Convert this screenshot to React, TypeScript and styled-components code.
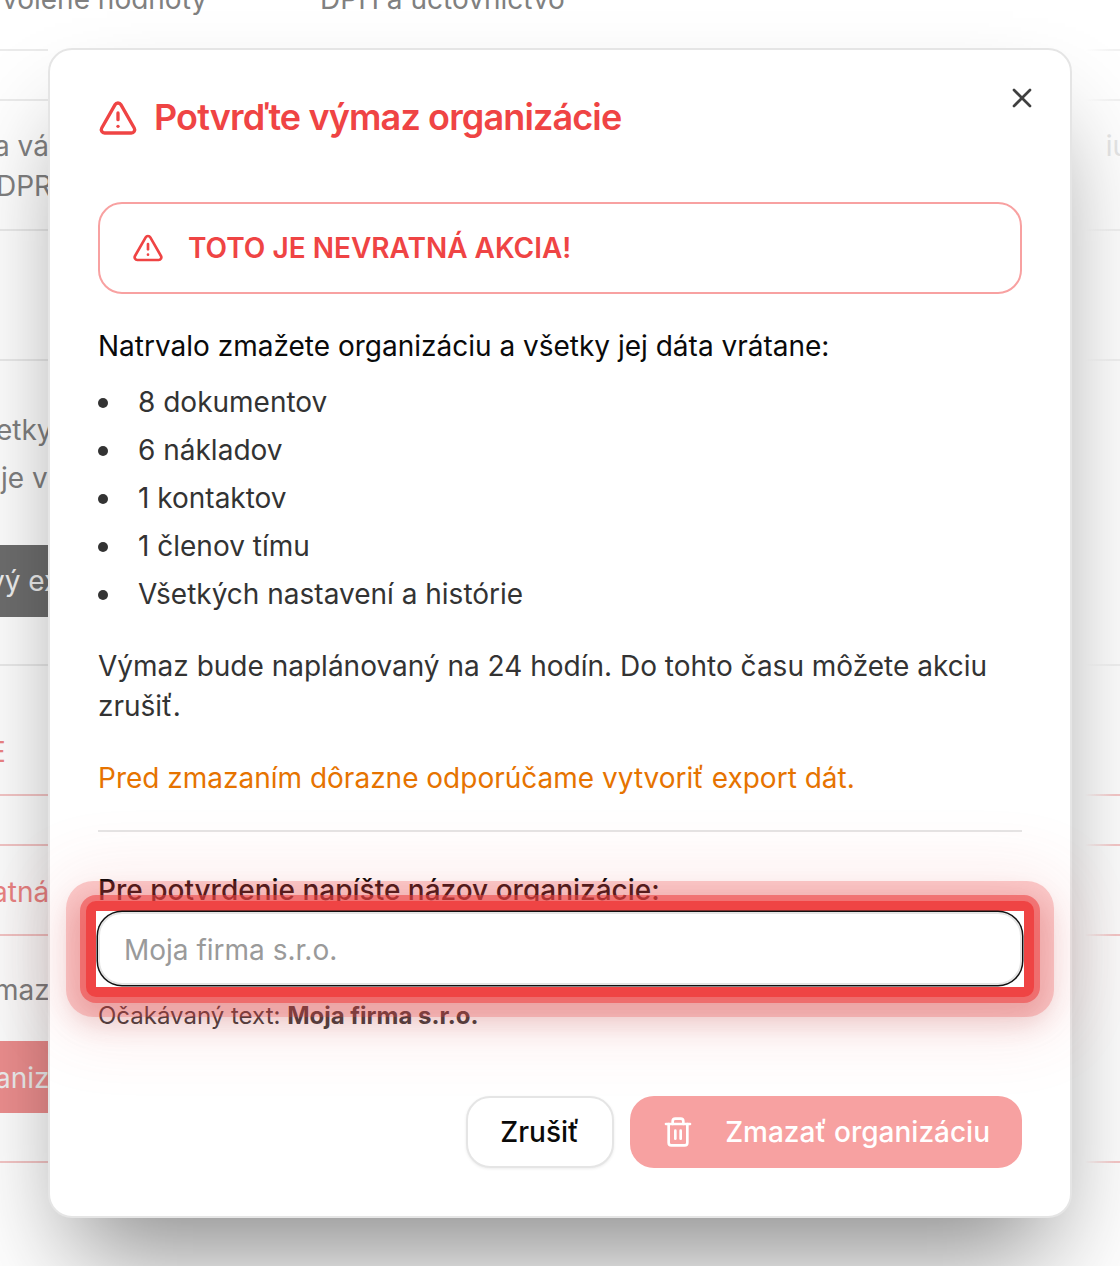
import React, { FC } from "react";
import styled, { createGlobalStyle } from "styled-components";
import { TriangleAlert, Trash2, X } from "lucide-react";

const GlobalStyle = createGlobalStyle`
  html, body {
    margin: 0;
    padding: 0;
    background: #fff;
    overflow: hidden;
  }
  body {
    font-family: "Inter", "Liberation Sans", sans-serif;
    font-size: 28px;
    line-height: 40px;
    color: #0a0a0a;
  }
  * {
    box-sizing: border-box;
  }
`;

const Page = styled.div`
  position: relative;
  width: 1120px;
  height: 1266px;
  overflow: hidden;
  background: #fff;
`;

/* what is left of the settings page behind the dialog */
const Row = styled.div<{ $h: number; $pink?: boolean; $top?: number }>`
  display: flex;
  flex-shrink: 0;
  height: ${(p) => p.$h}px;
  padding-top: ${(p) => p.$top || 0}px;
  background: linear-gradient(
      90deg,
      ${(p) => (p.$pink ? "#f5c6c6" : "#ebebeb")} 0 48px,
      transparent 48px 1085px,
      ${(p) => (p.$pink ? "#f7c8c8" : "#f2f2f2")} 1115px
    )
    bottom / 100% 2px no-repeat;
`;

const TopRow = styled(Row)`
  align-items: flex-end;
  gap: 113px;
  padding-bottom: 32px;
`;

const BackColumn = styled.div`
  display: flex;
  flex-direction: column;
  align-items: flex-start;
`;

const BackText = styled.span<{ $shift?: number; $red?: boolean; $lh?: number }>`
  display: block;
  margin-left: ${(p) => p.$shift || 0}px;
  white-space: nowrap;
  line-height: ${(p) => p.$lh || 40}px;
  color: ${(p) => (p.$red ? "#ee8585" : "#808080")};
`;

const FadedText = styled.span`
  margin-left: auto;
  margin-right: -9px;
  color: #e6e6e6;
  white-space: nowrap;
`;

const BackButton = styled.div<{ $red?: boolean; $top: number }>`
  display: flex;
  align-items: center;
  width: 60px;
  height: 72px;
  margin-top: ${(p) => p.$top}px;
  overflow: hidden;
  white-space: nowrap;
  background: ${(p) => (p.$red ? "#ee8f8f" : "#6e6e6e")};
`;

const BackButtonLabel = styled.span<{ $shift: number; $low?: boolean }>`
  margin-left: ${(p) => p.$shift}px;
  padding-top: ${(p) => (p.$low ? 2 : 0)}px;
  color: #f0f0f0;
`;

const Modal = styled.div`
  position: absolute;
  top: 48px;
  left: 48px;
  width: 1024px;
  height: 1170px;
  padding: 48px;
  background: #fff;
  border: 2px solid #e5e5e5;
  border-radius: 24px;
  box-shadow: 0 60px 100px -24px rgba(0, 0, 0, 0.46);
`;

const CloseButton = styled.button`
  position: absolute;
  top: 32px;
  right: 32px;
  display: flex;
  width: 32px;
  height: 32px;
  padding: 0;
  border: 0;
  background: none;
  color: #404040;
`;

const Title = styled.h2`
  display: flex;
  align-items: center;
  gap: 16px;
  margin: 0;
  height: 40px;
  font-size: 36px;
  line-height: 38px;
  font-weight: 600;
  letter-spacing: -0.87px;
  color: #ef4444;
`;

const TitleText = styled.span`
  margin-top: -2px;
`;

const Alert = styled.div`
  display: flex;
  align-items: center;
  gap: 24px;
  height: 92px;
  margin-top: 64px;
  padding: 0 32px;
  border: 2px solid #f8a1a1;
  border-radius: 24px;
  font-weight: 600;
  color: #ef4444;
`;

const Lead = styled.p`
  margin: 32px 0 0;
`;

const List = styled.ul`
  display: flex;
  flex-direction: column;
  gap: 8px;
  margin: 16px 0 0;
  padding: 0 0 0 40px;
  list-style: none;
  color: #333;
`;

const ListItem = styled.li`
  position: relative;
  &::before {
    content: "";
    position: absolute;
    top: 16px;
    left: -40px;
    width: 10px;
    height: 10px;
    border-radius: 50%;
    background: #333;
  }
`;

const Paragraph = styled.p<{ $orange?: boolean }>`
  margin: 32px 0 0;
  color: ${(p) => (p.$orange ? "#e67300" : "#333")};
`;

const Divider = styled.hr`
  margin: 32px 0 0;
  height: 2px;
  border: 0;
  background: #e5e5e5;
`;

const Label = styled.label`
  display: block;
  margin-top: 44px;
  line-height: 28px;
  font-weight: 500;
  color: #0a0a0a;
`;

const InputFrame = styled.div`
  position: relative;
  margin: -3px -12px 0;
  padding: 1px 2px 2px;
  background: #fff;
  border: 10px solid #ef4444;
  border-radius: 10px;
  box-shadow: 0 0 0 6px rgba(239, 68, 68, 0.58), 0 0 0 20px rgba(239, 68, 68, 0.26),
    0 12px 28px 14px rgba(170, 40, 40, 0.22), 0 4px 70px 34px rgba(239, 68, 68, 0.1);
`;

const Input = styled.input`
  display: block;
  width: 100%;
  height: 73px;
  padding: 2px 24px 0;
  border: 2px solid #e5e5e5;
  border-radius: 24px;
  background: #fff;
  box-shadow: 0 0 0 1.5px #111;
  outline: 0;
  font: inherit;
  color: #0a0a0a;
  &::placeholder {
    color: #9a9a9a;
  }
`;

const Help = styled.p`
  margin: 3px 0 0;
  font-size: 24px;
  line-height: 32px;
  color: #404040;
  strong {
    font-weight: 700;
  }
`;

const Actions = styled.div`
  display: flex;
  justify-content: flex-end;
  gap: 16px;
  margin-top: 64px;
`;

const Button = styled.button<{ $danger?: boolean }>`
  display: flex;
  align-items: center;
  gap: 31px;
  height: 72px;
  padding: ${(p) => (p.$danger ? "0 32px" : "0 33px 0 32px")};
  border: ${(p) => (p.$danger ? "0" : "2px solid #e5e5e5")};
  border-radius: 24px;
  background: ${(p) => (p.$danger ? "#f7a1a1" : "#fff")};
  box-shadow: ${(p) => (p.$danger ? "none" : "0 1px 3px rgba(0, 0, 0, 0.08)")};
  font: inherit;
  font-weight: 500;
  color: ${(p) => (p.$danger ? "#fff" : "#0a0a0a")};
`;

const items = [
  "8 dokumentov",
  "6 nákladov",
  "1 kontaktov",
  "1 členov tímu",
  "Všetkých nastavení a histórie",
];

const App: FC = () => {
  return (
    <Page>
      <GlobalStyle />
      <TopRow $h={51}>
        <BackText $shift={2}>volené hodnoty</BackText>
        <BackText>DPH a účtovníctvo</BackText>
      </TopRow>
      <Row $h={50} />
      <Row $h={130} $top={25}>
        <BackColumn>
          <BackText $shift={-6}>a vá</BackText>
          <BackText $shift={-4}>DPR</BackText>
        </BackColumn>
        <FadedText>iu</FadedText>
      </Row>
      <Row $h={130} />
      <Row $h={305} $top={45}>
        <BackColumn>
          <BackText $shift={-4} $lh={48}>etky</BackText>
          <BackText $shift={1} $lh={48}>je v</BackText>
          <BackButton $top={43}>
            <BackButtonLabel $shift={-11}>vý ex</BackButtonLabel>
          </BackButton>
        </BackColumn>
      </Row>
      <Row $h={130} $top={66} $pink>
        <BackText $shift={-11} $red>E</BackText>
      </Row>
      <Row $h={50} $pink />
      <Row $h={90} $top={26} $pink>
        <BackText $shift={-8} $red>atná</BackText>
      </Row>
      <Row $h={227} $top={34} $pink>
        <BackColumn>
          <BackText $shift={-6}>maz</BackText>
          <BackButton $red $top={31}>
            <BackButtonLabel $shift={-5} $low>aniz</BackButtonLabel>
          </BackButton>
        </BackColumn>
      </Row>
      <Modal role="dialog">
        <CloseButton aria-label="Zavrieť">
          <X size={32} />
        </CloseButton>
        <Title>
          <TriangleAlert size={40} />
          <TitleText>Potvrďte výmaz organizácie</TitleText>
        </Title>
        <Alert>
          <TriangleAlert size={32} />
          TOTO JE NEVRATNÁ AKCIA!
        </Alert>
        <Lead>Natrvalo zmažete organizáciu a všetky jej dáta vrátane:</Lead>
        <List>
          {items.map((el) => (
            <ListItem key={el}>{el}</ListItem>
          ))}
        </List>
        <Paragraph>
          Výmaz bude naplánovaný na 24 hodín. Do tohto času môžete akciu zrušiť.
        </Paragraph>
        <Paragraph $orange>
          Pred zmazaním dôrazne odporúčame vytvoriť export dát.
        </Paragraph>
        <Divider />
        <Label>Pre potvrdenie napíšte názov organizácie:</Label>
        <InputFrame>
          <Input placeholder="Moja firma s.r.o." />
        </InputFrame>
        <Help>
          Očakávaný text: <strong>Moja firma s.r.o.</strong>
        </Help>
        <Actions>
          <Button>Zrušiť</Button>
          <Button $danger>
            <Trash2 size={32} />
            Zmazať organizáciu
          </Button>
        </Actions>
      </Modal>
    </Page>
  );
};

export default App;
